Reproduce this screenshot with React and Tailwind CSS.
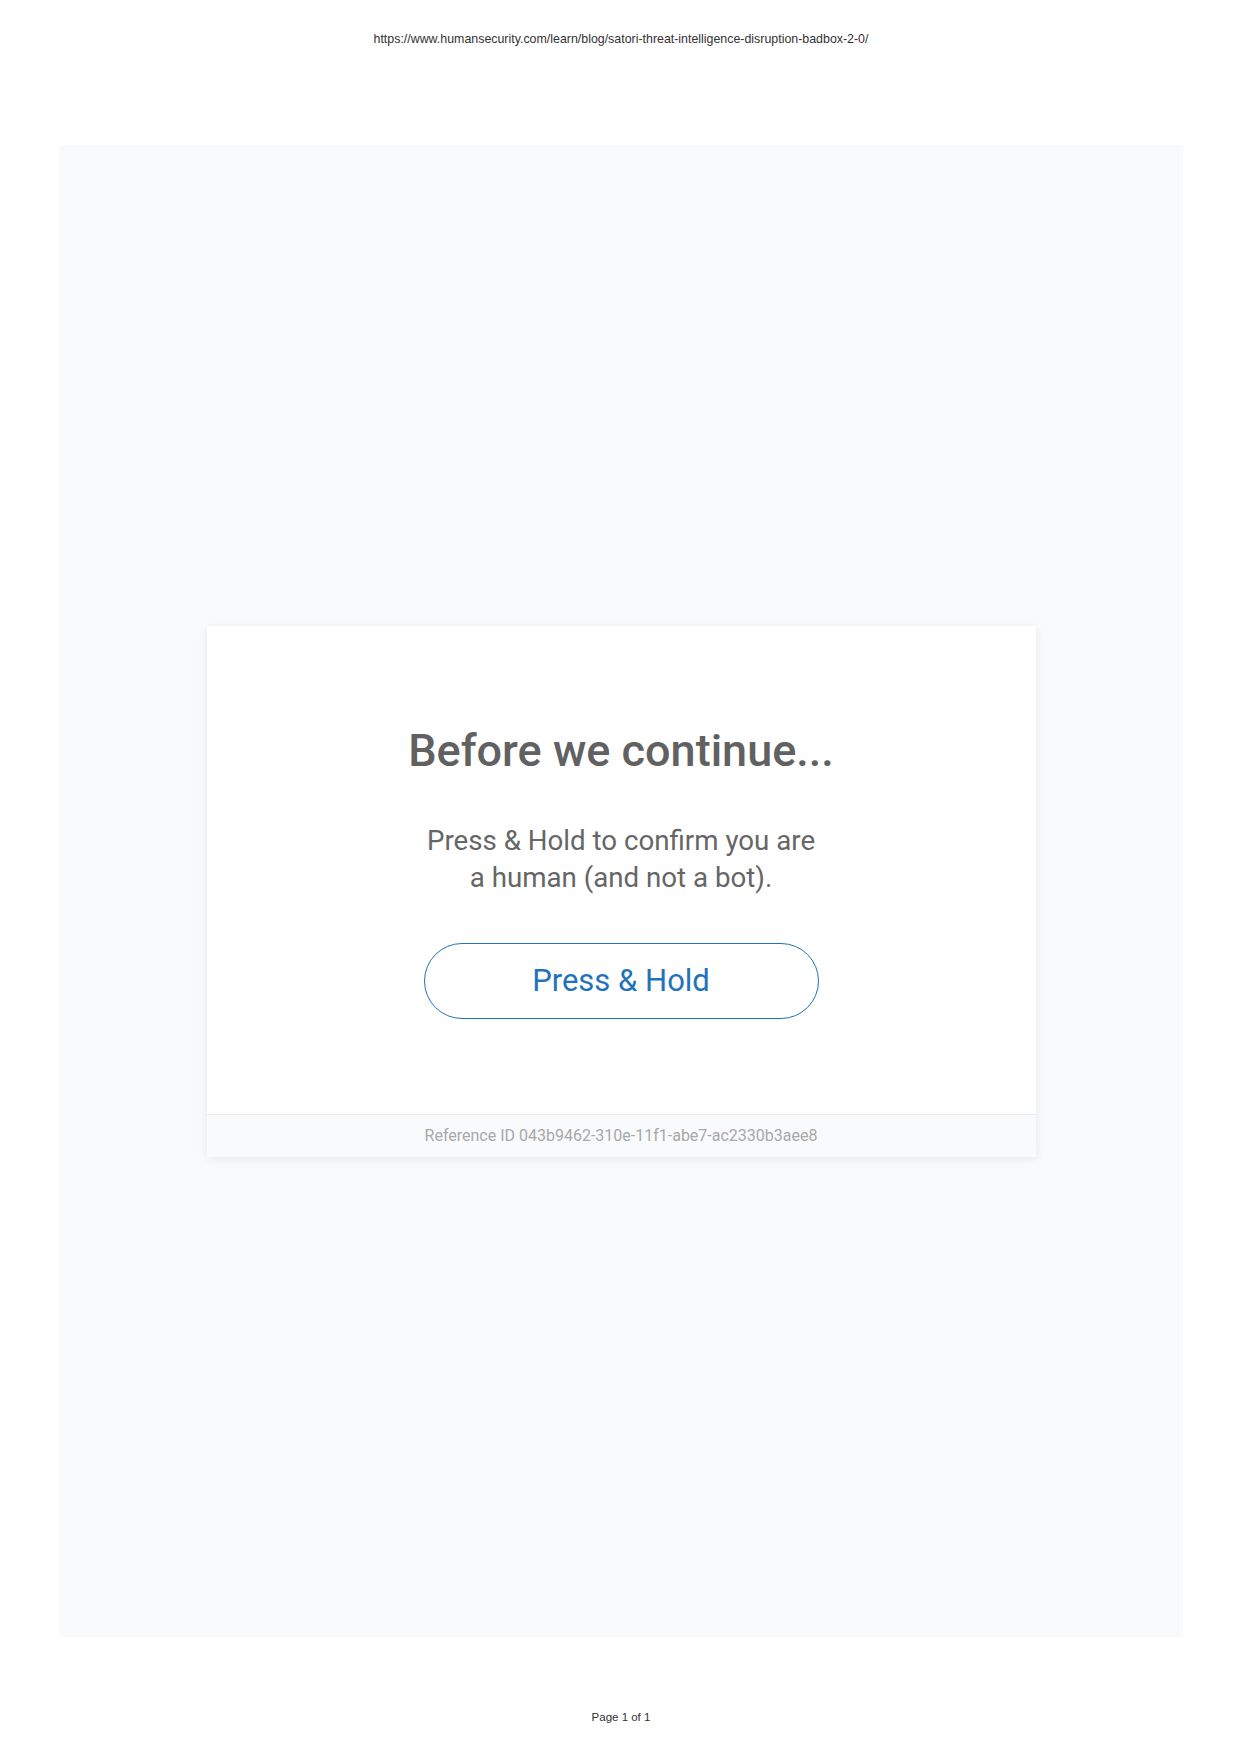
export default function App() {
  return (
    <div className="w-[1242px] h-[1756px] bg-white flex flex-col items-center" style={{ fontFamily: "Roboto, 'Liberation Sans', sans-serif" }}>
      <div className="pt-[32px] h-[145px] text-[12.4px] leading-[14px] text-[#333]" style={{ fontFamily: "'Liberation Sans', Arial, sans-serif" }}>
        https://www.humansecurity.com/learn/blog/satori-threat-intelligence-disruption-badbox-2-0/
      </div>
      <div className="w-[1124px] h-[1492px] bg-[#f9fafb] flex items-center justify-center">
        <div className="w-[829px] h-[531px] bg-white shadow-[0_2px_10px_rgba(0,0,0,0.08)] flex flex-col">
          <div className="flex-1 flex flex-col items-center pt-[98px]">
            <h1 className="text-[45px] leading-[54px] font-medium text-[#616161]">Before we continue...</h1>
            <p className="mt-[44px] text-[27.7px] leading-[37px] text-[#666] text-center">
              Press &amp; Hold to confirm you are<br />a human (and not a bot).
            </p>
            <button className="mt-[47px] w-[395px] h-[76px] rounded-full border-[1.5px] border-[#1f72bb] text-[#1f72bb] text-[31px] leading-none bg-white">
              Press &amp; Hold
            </button>
          </div>
          <div className="h-[43px] border-t border-[#ececec] bg-[#f9fafb] flex items-center justify-center text-[16px] text-[#a8a8a8]">
            Reference ID 043b9462-310e-11f1-abe7-ac2330b3aee8
          </div>
        </div>
      </div>
      <div className="mt-[72px] text-[11.5px] text-[#333]" style={{ fontFamily: "'Liberation Sans', Arial, sans-serif" }}>
        Page 1 of 1
      </div>
    </div>
  );
}
